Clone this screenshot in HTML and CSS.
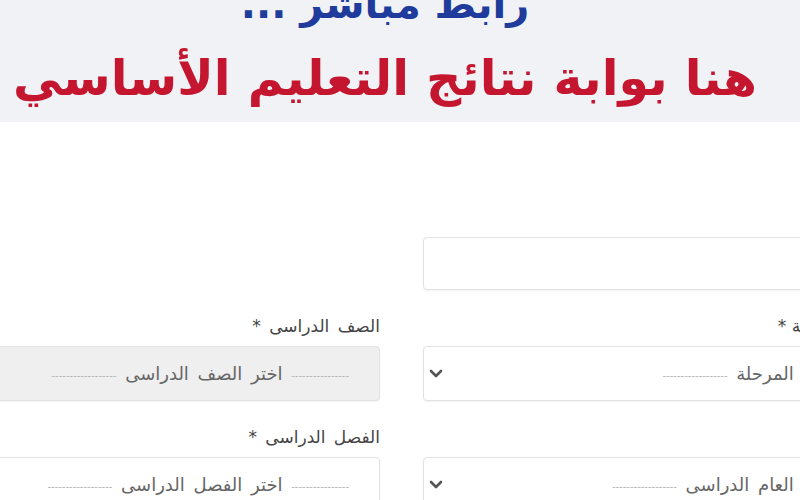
FILE: index.html
```html
<!DOCTYPE html>
<html lang="ar" dir="rtl">

<head>
    <meta charset="UTF-8">
    <meta name="viewport" content="width=device-width, initial-scale=1.0">
    <title>بوابة نتائج التعليم الأساسي</title>
    <link rel="stylesheet" href="styles.css">
</head>

<body>
    <!-- العنوان -->
    <div class="banner">
        <div class="banner-sub">رابط مباشر ...</div>
        <div class="banner-title">هنا بوابة نتائج التعليم الأساسي</div>
    </div>

    <!-- نموذج البحث -->
    <div class="form">
        <div class="field">
            <div class="input"></div>
        </div>
        <div class="field"></div>

        <div class="field">
            <label class="label indent">المرحلة *</label>
            <div class="select wide">
                <span class="select-text">اختر المرحلة <span class="dash">------------------</span></span>
                <svg class="chevron" width="14" height="9" viewBox="0 0 14 9">
                    <path d="M2 2 L7 7 L12 2" fill="none" stroke="#555" stroke-width="2.6" stroke-linecap="round" stroke-linejoin="round" />
                </svg>
            </div>
        </div>
        <div class="field">
            <label class="label">الصف الدراسى *</label>
            <div class="select disabled">
                <span class="select-text"><span class="dash">----------------</span> اختر الصف الدراسى <span class="dash">------------------</span></span>
            </div>
        </div>

        <div class="field">
            <label class="label">العام *</label>
            <div class="select wide">
                <span class="select-text">اختر العام الدراسى <span class="dash">------------------</span></span>
                <svg class="chevron" width="14" height="9" viewBox="0 0 14 9">
                    <path d="M2 2 L7 7 L12 2" fill="none" stroke="#555" stroke-width="2.6" stroke-linecap="round" stroke-linejoin="round" />
                </svg>
            </div>
        </div>
        <div class="field">
            <label class="label">الفصل الدراسى *</label>
            <div class="select">
                <span class="select-text"><span class="dash">----------------</span> اختر الفصل الدراسى <span class="dash">------------------</span></span>
            </div>
        </div>
    </div>
</body>

</html>
```

FILE: styles.css
```css
body {
    margin: 0;
    overflow: hidden;
    font-family: "DejaVu Sans", "Noto Sans", sans-serif;
    background: #ffffff;
    color: #555;
}

/* العنوان */
.banner {
    height: 122px;
    background: #f1f2f6;
    text-align: center;
    overflow: hidden;
    padding-right: 30px;
}

.banner-sub {
    color: #1f3b9b;
    font-size: 40px;
    font-weight: bold;
    line-height: 48px;
    margin-top: -20px;
    white-space: nowrap;
}

.banner-title {
    color: #c4162f;
    font-size: 49px;
    font-weight: bold;
    line-height: 70px;
    margin-top: 16px;
    white-space: nowrap;
}

/* النموذج */
.form {
    display: grid;
    grid-template-columns: 450px 450px;
    column-gap: 43px;
    row-gap: 26px;
    width: 943px;
    margin-top: 115px;
    margin-right: -73px;
}

.field {
    display: flex;
    flex-direction: column;
    gap: 10px;
}

.label {
    font-size: 17px;
    line-height: 20px;
    color: #444;
    word-spacing: 3px;
}

.label.indent {
    padding-right: 27px;
    word-spacing: 0;
}

.input {
    height: 51px;
    border: 1px solid #e2e2e2;
    border-radius: 4px;
    background: #fff;
    box-shadow: 0 1px 2px rgba(0, 0, 0, 0.05);
}

.select {
    height: 53px;
    border: 1px solid #e2e2e2;
    border-radius: 4px;
    background: #fff;
    display: flex;
    align-items: center;
    justify-content: space-between;
    padding: 0 30px 0 5px;
    box-shadow: 0 1px 2px rgba(0, 0, 0, 0.05);
}

.select.wide {
    padding-right: 38px;
}

.select.disabled {
    background: #efefef;
}

.select-text {
    font-size: 18px;
    color: #666;
    white-space: nowrap;
    word-spacing: 3px;
}

.dash {
    font-size: 10px;
    color: #b5b5b5;
    vertical-align: middle;
}

.chevron {
    display: block;
}
```
